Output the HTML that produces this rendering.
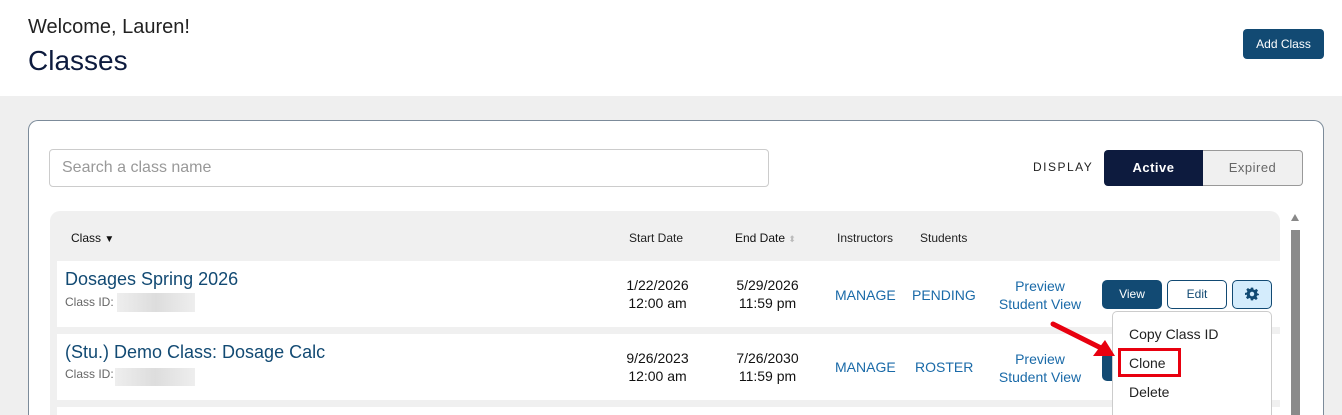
<!DOCTYPE html><html style="height:415px;overflow:hidden"><head><style>
*{box-sizing:border-box;margin:0;padding:0}
body{width:1342px;height:415px;overflow:hidden;background:#efefef;font-family:"Liberation Sans",Arial,sans-serif;position:relative}
.a{position:absolute}
.blue{color:#1a6aa8}
.c{text-align:center}
</style></head><body>
<div class="a" style="left:0;top:0;width:1342px;height:96px;background:#fff"></div>
<div class="a" style="left:28px;top:16px;font-size:20px;color:#222">Welcome, Lauren!</div>
<div class="a" style="left:28px;top:45px;font-size:28px;color:#0d1b3e">Classes</div>
<div class="a c" style="left:1243px;top:29px;width:81px;height:30px;background:#124a73;border-radius:4px;color:#fff;font-size:12px;line-height:30px">Add Class</div>
<div class="a" style="left:28px;top:120px;width:1296px;height:296px;background:#fff;border:1px solid #7c8b9a;border-bottom:none;border-radius:10px 10px 0 0"></div>
<div class="a" style="left:49px;top:149px;width:720px;height:38px;border:1px solid #ccc;border-radius:4px;font-size:16px;color:#999;padding:9px 12px">Search a class name</div>
<div class="a" style="left:1033px;top:160px;font-size:12px;letter-spacing:1.5px;color:#222">DISPLAY</div>
<div class="a c" style="left:1104px;top:150px;width:99px;height:36px;background:#0d1b3e;border-radius:4px 0 0 4px;color:#fff;font-size:13px;font-weight:bold;line-height:36px;letter-spacing:.5px">Active</div>
<div class="a c" style="left:1203px;top:150px;width:100px;height:36px;background:#f0f0f0;border:1px solid #999;border-left:none;border-radius:0 4px 4px 0;color:#666;font-size:13px;line-height:34px;letter-spacing:.5px">Expired</div>
<div class="a" style="left:50px;top:211px;width:1230px;height:204px;background:#f0f0f0;border-radius:10px 10px 0 0"></div>
<div class="a" style="left:71px;top:231px;font-size:12px;color:#111">Class <span style="font-size:10px">▼</span></div>
<div class="a" style="left:629px;top:231px;font-size:12px;color:#222">Start Date</div>
<div class="a" style="left:735px;top:231px;font-size:12px;color:#111">End Date <span style="color:#bbb;font-size:9px">⬍</span></div>
<div class="a" style="left:837px;top:231px;font-size:12px;color:#222">Instructors</div>
<div class="a" style="left:920px;top:231px;font-size:12px;color:#222">Students</div>
<div class="a" style="left:57px;top:261px;width:1223px;height:66px;background:#fff"></div>
<div class="a" style="left:57px;top:334px;width:1223px;height:66px;background:#fff"></div>
<div class="a" style="left:57px;top:407px;width:1223px;height:8px;background:#fff"></div>
<div class="a" style="left:1291px;top:230px;width:9px;height:185px;background:#8a8a8a"></div>
<div class="a" style="left:1291px;top:214px;width:0;height:0;border-left:4px solid transparent;border-right:4px solid transparent;border-bottom:7px solid #888"></div>
<div class="a" style="left:65px;top:269px;font-size:18px;color:#124a73">Dosages Spring 2026</div>
<div class="a" style="left:65px;top:295px;font-size:12px;color:#666">Class ID:</div>
<div class="a" style="left:117px;top:293px;width:78px;height:19px;background:linear-gradient(90deg,#eee,#ddd,#eee)"></div>
<div class="a c" style="left:610px;top:276px;width:95px;font-size:14px;line-height:18px;color:#111">1/22/2026<br>12:00 am</div>
<div class="a c" style="left:720px;top:276px;width:95px;font-size:14px;line-height:18px;color:#111">5/29/2026<br>11:59 pm</div>
<div class="a blue" style="left:835px;top:287px;font-size:14px">MANAGE</div>
<div class="a blue" style="left:912px;top:287px;font-size:14px">PENDING</div>
<div class="a blue c" style="left:990px;top:277px;width:100px;font-size:14px;line-height:18px">Preview<br>Student View</div>
<div class="a c" style="left:1102px;top:280px;width:60px;height:29px;background:#124a73;border-radius:5px;color:#fff;font-size:12px;line-height:29px">View</div>
<div class="a c" style="left:1167px;top:280px;width:60px;height:29px;border:1px solid #124a73;border-radius:5px;color:#124a73;font-size:12px;line-height:27px">Edit</div>
<div class="a" style="left:1232px;top:280px;width:40px;height:29px;background:#d4ecfc;border:1px solid #124a73;border-radius:5px"></div>
<svg class="a" style="left:1245px;top:287px" width="14" height="14" viewBox="0 0 24 24"><path fill="#124a73" d="M10 1h4l.6 3.2 2.2.9 2.7-1.9 2.8 2.8-1.9 2.7.9 2.2L24 12v0l-.1 2-3.2.6-.9 2.2 1.9 2.7-2.8 2.8-2.7-1.9-2.2.9L14 23h-4l-.6-3.2-2.2-.9-2.7 1.9-2.8-2.8 1.9-2.7-.9-2.2L0 14v-4l3.2-.6.9-2.2L2.2 4.5 5 1.7l2.7 1.9 2.2-.9z"/><circle cx="12" cy="12" r="3.8" fill="#d4ecfc"/></svg>
<div class="a" style="left:65px;top:342px;font-size:18px;color:#124a73">(Stu.) Demo Class: Dosage Calc</div>
<div class="a" style="left:65px;top:367px;font-size:12px;color:#666">Class ID:</div>
<div class="a" style="left:115px;top:368px;width:80px;height:18px;background:linear-gradient(90deg,#eee,#ddd,#eee)"></div>
<div class="a c" style="left:610px;top:349px;width:95px;font-size:14px;line-height:18px;color:#111">9/26/2023<br>12:00 am</div>
<div class="a c" style="left:720px;top:349px;width:95px;font-size:14px;line-height:18px;color:#111">7/26/2030<br>11:59 pm</div>
<div class="a blue" style="left:835px;top:359px;font-size:14px">MANAGE</div>
<div class="a blue" style="left:915px;top:359px;font-size:14px">ROSTER</div>
<div class="a blue c" style="left:990px;top:350px;width:100px;font-size:14px;line-height:18px">Preview<br>Student View</div>
<div class="a" style="left:1102px;top:352px;width:30px;height:29px;background:#124a73;border-radius:5px"></div>
<div class="a" style="left:1262px;top:352px;width:10px;height:29px;background:#124a73;border-radius:0 5px 5px 0"></div>
<div class="a" style="left:1112px;top:311px;width:160px;height:104px;background:#fff;border:1px solid #ccc;border-bottom:none;border-radius:5px 5px 0 0"></div>
<div class="a" style="left:1129px;top:326px;font-size:14px;color:#222">Copy Class ID</div>
<div class="a" style="left:1118px;top:348px;width:63px;height:29px;border:3px solid #e8000f"></div>
<div class="a" style="left:1129px;top:355px;font-size:14px;color:#222">Clone</div>
<div class="a" style="left:1129px;top:384px;font-size:14px;color:#222">Delete</div>
<svg class="a" style="left:1045px;top:318px" width="75" height="45"><line x1="8" y1="6" x2="60" y2="32" stroke="#e8000f" stroke-width="5" stroke-linecap="round"/><polygon points="70,38 48,38 60,22" fill="#e8000f"/></svg>
</body></html>
